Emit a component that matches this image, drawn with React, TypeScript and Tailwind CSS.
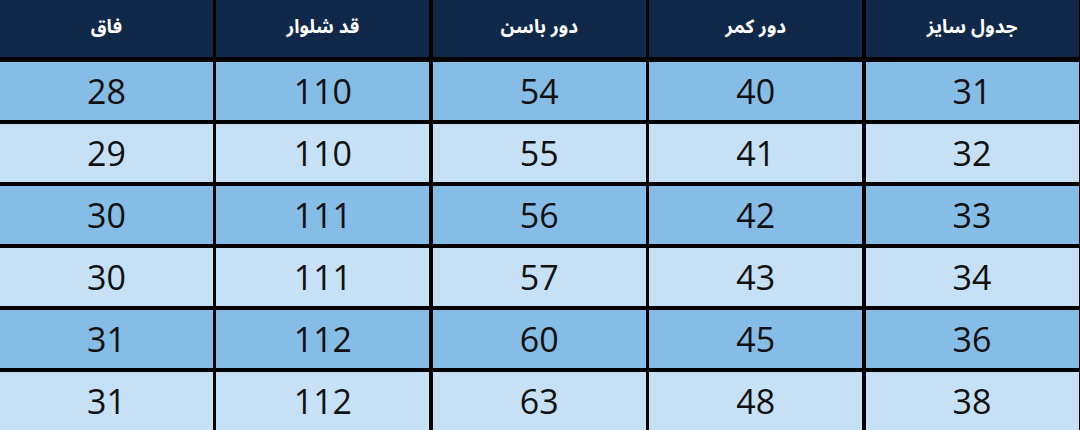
import React from "react";

const headers = ["جدول سایز", "دور کمر", "دور باسن", "قد شلوار", "فاق"];
const rows = [
  [31, 40, 54, 110, 28],
  [32, 41, 55, 110, 29],
  [33, 42, 56, 111, 30],
  [34, 43, 57, 111, 30],
  [36, 45, 60, 112, 31],
  [38, 48, 63, 112, 31],
];

export default function App() {
  return (
    <div dir="rtl" className="w-[1080px] h-[430px] bg-black flex flex-col gap-[4px] pr-[1.5px] overflow-hidden">
      <div className="grid grid-cols-5 gap-x-[3.5px] h-[57px] mb-px">
        {headers.map((h) => (
          <div
            key={h}
            className="bg-[#10294a] flex items-center justify-center text-white font-bold text-[19px] pb-[3px]"
            style={{ fontFamily: '"Noto Sans Arabic", "Vazirmatn", "DejaVu Sans", sans-serif' }}
          >
            {h}
          </div>
        ))}
      </div>
      {rows.map((r, i) => (
        <div key={i} className="grid grid-cols-5 gap-x-[3.5px] h-[58px] shrink-0">
          {r.map((v, j) => (
            <div
              key={j}
              className={`${i % 2 === 0 ? "bg-[#86bde6]" : "bg-[#c6e1f6]"} flex items-center justify-center text-[#111] text-[34px] font-['Open_Sans',sans-serif]`}
            >
              {v}
            </div>
          ))}
        </div>
      ))}
    </div>
  );
}
